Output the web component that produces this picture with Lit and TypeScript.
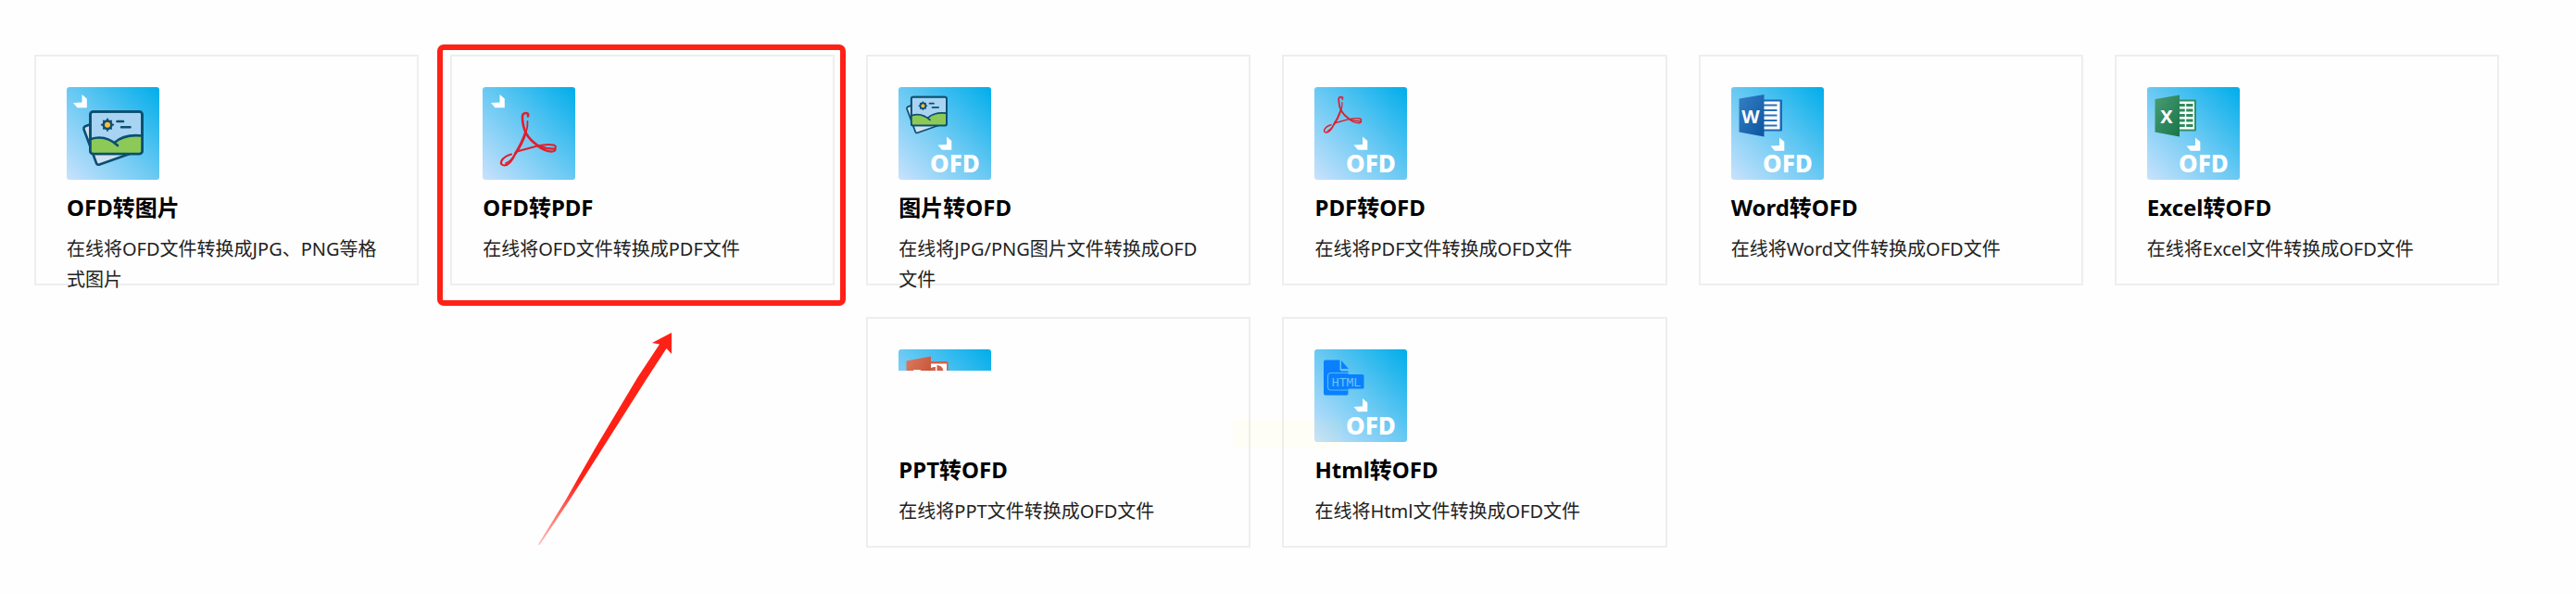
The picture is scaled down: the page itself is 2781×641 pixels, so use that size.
import { LitElement, html, svg, css, nothing } from "lit";
import { customElement, property } from "lit/decorators.js";

type Kind = "toPicture" | "toPdf" | "picture" | "pdf" | "word" | "excel" | "ppt" | "html";

interface Tool {
  kind: Kind;
  title: string;
  text: string;
}

const FONT = css`"Noto Sans", "Noto Sans CJK SC", sans-serif`;

const picture = svg`
  <g stroke="#0b4f70" stroke-width="2.6" stroke-linejoin="round" stroke-linecap="round">
    <path d="M26 40L19.500 42.500Q18 43.500 18.500 45.500L32 82Q33 84.500 35.500 83.500L68 72Z" fill="#cfe0f1"/>
    <rect x="25.500" y="26.500" width="56" height="45.500" rx="3" fill="#a9d3f2"/>
    <path d="M26 56Q40 51 51 60Q62 51 81 52V69Q81 71.500 79 71.500H28Q26 71.500 26 69Z" fill="#8cc957" stroke="none"/>
    <path d="M26 56Q42 51 55 63M51.500 60Q62 50.500 81 52.500" fill="none"/>
    <path d="M44 34.500V47M37.700 40.700H50.300M39.800 36.500L48.200 44.900M48.200 36.500L39.800 44.900" stroke-width="1.800"/>
    <circle cx="44" cy="40.700" r="4.300" fill="#fbbd3f" stroke-width="2.600"/>
    <path d="M54.500 37H61M59 43.300H68.500" fill="none"/>
    <rect x="25.500" y="26.500" width="56" height="45.500" rx="3" fill="none"/>
  </g>`;

const acrobat = svg`
  <g fill="none" stroke="#e01f2d" stroke-linecap="round" stroke-linejoin="round">
    <path d="M49 31.500Q50 28 46.500 28Q42.500 28 43 34Q43.500 43 47 50Q51 57 59 62.500" stroke-width="2.600"/>
    <path d="M48.500 37Q49 43 46.500 50" stroke-width="1.800"/>
    <path d="M46.500 49Q42 62 35.500 71.500" stroke-width="3"/>
    <path d="M35.500 71.500Q30 84 23.500 84.500Q18.500 84 20.500 79.500Q23.500 74.500 31 72.500" stroke-width="2.200"/>
    <path d="M35.500 71Q31 80 25 82" stroke-width="1.600"/>
    <path d="M37 69.500Q48 66.500 59 63.500Q70 61 76.500 62.500Q80 63.500 78.500 65.500" stroke-width="2"/>
    <path d="M58 62.500Q68 70 75.500 69.500Q79 69 78.500 66.500Q69 67 60 63" stroke-width="2.200"/>
  </g>`;

const chevron = (x: number, y: number) =>
  svg`<path transform="translate(${x} ${y})" d="M9.500 0L14.800 4.500V14.300H4.500L0 9L9.500 8.500Z" fill="#fff"/>`;

const ofd = svg`<text class="ofd" x="34" y="92">OFD</text>`;

const art: Record<Kind, unknown> = {
  toPicture: svg`${chevron(7, 8)}${picture}`,
  toPdf: svg`${chevron(9, 8)}${acrobat}`,
  picture: svg`<g transform="translate(-3.500 -7.500) scale(.68)">${picture}</g>${chevron(42.5, 53.5)}${ofd}`,
  pdf: svg`<g transform="translate(-3 -8.500) scale(.68)">${acrobat}</g>${chevron(42.5, 53.5)}${ofd}`,
  word: svg`
    <path d="M35 13.500H54Q55 13.500 55 14.500V46.500Q55 47.500 54 47.500H35Z" fill="#1d68b4"/>
    <path d="M35 15.500H52.500V45.500H35Z" fill="#fff"/>
    <path d="M35 19.500H49.500M35 25H49.500M35 30.500H49.500M35 36H49.500M35 41.500H49.500" stroke="#2a72b8" stroke-width="2"/>
    <path d="M8.500 12.500L35.500 8V53.500L8.500 48.500Z" fill="url(#door-blue)"/>
    <text class="letter" x="21" y="39">W</text>
    ${chevron(42.5, 54.5)}${ofd}`,
  excel: svg`
    <path d="M35 13.500H52Q53 13.500 53 14.500V46.500Q53 47.500 52 47.500H35Z" fill="#2f9262"/>
    <path d="M35 15.500H51V45.500H35Z" fill="#fff"/>
    <path d="M35 19.500H49.500M35 25H49.500M35 30.500H49.500M35 36H49.500M35 41.500H49.500" stroke="#2f8a5c" stroke-width="3"/>
    <path d="M41.500 16V45" stroke="#fff" stroke-width="1.500"/>
    <path d="M8.500 13L35 8.500V53.500L8.500 48.500Z" fill="url(#door-green)"/>
    <text class="letter" x="21" y="39">X</text>
    ${chevron(42.5, 54.5)}${ofd}`,
  ppt: svg`
    <path d="M35 13H52.500Q53.500 13 53.500 14V47.500H35Z" fill="#d0624a"/>
    <path d="M35 15.500H52V45.500H35Z" fill="#fff"/>
    <path d="M41.500 17V24H48.500Q48 17.500 41.500 17ZM35 20Q38 18.500 40 19V26H35Z" fill="#d0624a"/>
    <path d="M8.500 12.500L35 7.500V53.500L8.500 48.500Z" fill="url(#door-red)"/>
    <text class="letter" x="21" y="36">P</text>`,
  html: svg`
    <path d="M12 11.500H27.500V21Q27.500 23.500 30 23.500H36.500V47.500Q36.500 49.500 34.500 49.500H12Q10 49.500 10 47.500V13.500Q10 11.500 12 11.500Z" fill="#0a80ff"/>
    <path d="M29 12L37 21H29Z" fill="#0a80ff"/>
    <path d="M18 25.500H37V44H18Q14.500 44 14.500 40.500V29Q14.500 25.500 18 25.500Z" fill="#0a80ff" stroke="#58b9f7" stroke-width="1.200"/>
    <rect x="16.500" y="27" width="37" height="15.500" rx="1.500" fill="#0a80ff"/>
    <text class="label" x="34.500" y="39.500">HTML</text>
    ${chevron(42.5, 53)}${ofd}`,
};

@customElement("tool-icon")
class ToolIcon extends LitElement {
  @property() kind: Kind = "pdf";

  static styles = css`
    :host { display: block; height: 100px; }
    .tile {
      width: 100px;
      height: 100px;
      border-radius: 3px;
      overflow: hidden;
      background: linear-gradient(45deg, #c9e2fc 0%, #69c9f3 50%, #00adea 100%) 0 0 / 100px 100px;
    }
    .partial { height: 23px; border-radius: 3px 3px 0 0; }
    .art { display: block; width: 100px; height: 100px; }
    text { font-family: ${FONT}; font-weight: 700; fill: #fff; }
    .ofd { font-size: 26px; font-weight: 800; }
    .letter { font-size: 20px; text-anchor: middle; }
    .label { font-family: "DejaVu Sans Mono", monospace; font-size: 13px; font-weight: 400; fill: #6cc4f8; text-anchor: middle; }
  `;

  render() {
    return html`
      <div class="tile ${this.kind === "ppt" ? "partial" : ""}">
        <svg class="art" viewBox="0 0 100 100" aria-hidden="true">
          <defs>
            <linearGradient id="door-blue" x2="1" y2="1"><stop stop-color="#3480c6"/><stop offset="1" stop-color="#0b559f"/></linearGradient>
            <linearGradient id="door-green" x2="1" y2="1"><stop stop-color="#4a9c73"/><stop offset="1" stop-color="#18764a"/></linearGradient>
            <linearGradient id="door-red" x2="1" y2="1"><stop stop-color="#dd7a61"/><stop offset="1" stop-color="#bd4527"/></linearGradient>
          </defs>
          ${art[this.kind]}
        </svg>
      </div>`;
  }
}

@customElement("app-root")
class AppRoot extends LitElement {
  private tools: Tool[] = [
    { kind: "toPicture", title: "OFD转图片", text: "在线将OFD文件转换成JPG、PNG等格式图片" },
    { kind: "toPdf", title: "OFD转PDF", text: "在线将OFD文件转换成PDF文件" },
    { kind: "picture", title: "图片转OFD", text: "在线将JPG/PNG图片文件转换成OFD文件" },
    { kind: "pdf", title: "PDF转OFD", text: "在线将PDF文件转换成OFD文件" },
    { kind: "word", title: "Word转OFD", text: "在线将Word文件转换成OFD文件" },
    { kind: "excel", title: "Excel转OFD", text: "在线将Excel文件转换成OFD文件" },
    { kind: "ppt", title: "PPT转OFD", text: "在线将PPT文件转换成OFD文件" },
    { kind: "html", title: "Html转OFD", text: "在线将Html文件转换成OFD文件" },
  ];

  static styles = css`
    :host { display: block; background: #fefefe; min-height: 100vh; font-family: ${FONT}; }
    .grid {
      display: grid;
      grid-template-columns: repeat(6, minmax(0, 1fr));
      grid-auto-rows: 249px;
      gap: 34px;
      padding: 59px 83px 48px 37px;
    }
    .card {
      position: relative;
      box-sizing: border-box;
      border: 2px solid #eee;
      padding: 33px 40px 33px 33px;
      color: #000;
      text-decoration: none;
    }
    .third { grid-column-start: 3; }
    .title { margin: 14px 0 0; font-size: 24px; line-height: 32px; font-weight: 700; }
    .text { margin: 12px 0 0; font-size: 20px; line-height: 33px; color: #222; }
    .frame {
      position: absolute;
      inset: -13px -14px -24px -16px;
      border: 6px solid #ff2116;
      border-radius: 7px;
      pointer-events: none;
    }
    .arrow { position: absolute; left: 93px; top: 297px; width: 146px; height: 232px; pointer-events: none; }
    .stamp {
      position: absolute;
      z-index: 1;
      left: 394px;
      top: 108px;
      width: 118px;
      box-sizing: border-box;
      padding: 0 12px;
      font-size: 16px;
      line-height: 32px;
      white-space: nowrap;
      color: rgba(0, 0, 0, 0.02);
      background: rgba(255, 255, 120, 0.05);
      pointer-events: none;
    }
  `;

  private callout() {
    return html`
      <span class="frame"></span>
      <svg class="arrow" viewBox="0 0 146 232" aria-hidden="true">
        <defs>
          <linearGradient id="fade" gradientUnits="userSpaceOnUse" x1="1" y1="230" x2="42" y2="160">
            <stop stop-color="#ff2116" stop-opacity="0.300"/>
            <stop offset="1" stop-color="#ff2116"/>
          </linearGradient>
        </defs>
        <path d="M0 229.500L30 181L62 125L107.500 49L131 13.500L123 12L144 1V24L138.500 18L117 51L70 125L33 183L1.500 230Z" fill="url(#fade)"/>
      </svg>`;
  }

  render() {
    return html`
      <main class="grid">
        ${this.tools.map(
          (t) => html`
            <a class="card ${t.kind === "ppt" ? "third" : ""}" href="#${t.kind}">
              <tool-icon .kind=${t.kind}></tool-icon>
              <h3 class="title">${t.title}</h3>
              <p class="text">${t.text}</p>
              ${t.kind === "toPdf" ? this.callout() : nothing}
              ${t.kind === "ppt" ? html`<span class="stamp">1751035311</span>` : nothing}
            </a>`
        )}
      </main>`;
  }
}
